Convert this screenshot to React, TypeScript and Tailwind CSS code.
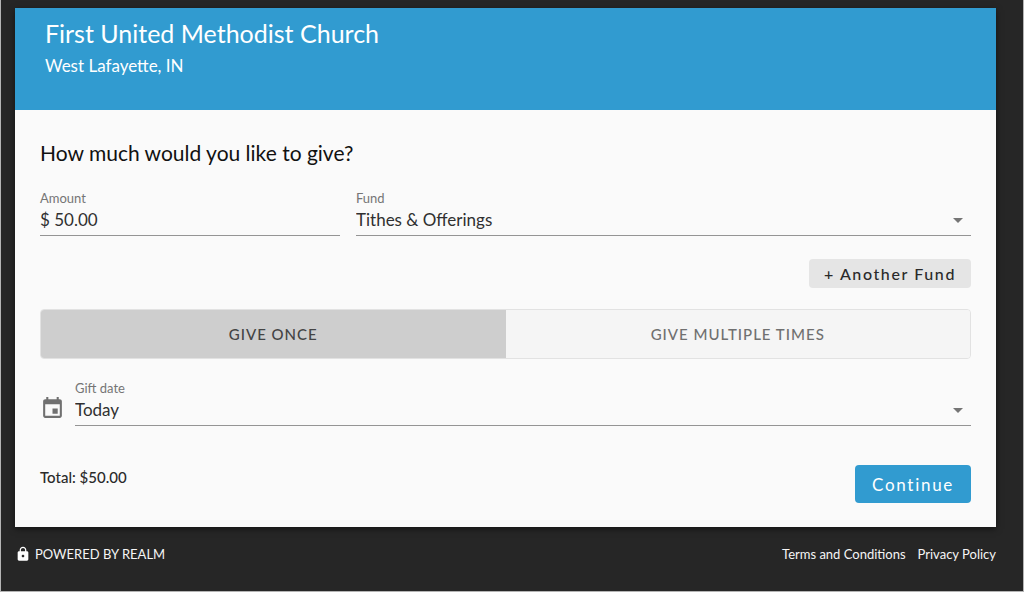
import { useState } from "react";
import type { ReactNode } from "react";

function CaretIcon() {
  return (
    <svg viewBox="0 0 10 5" className="pointer-events-none -ml-[18px] mr-2 h-[5px] w-[10px] shrink-0" fill="#757575" aria-hidden="true">
      <path d="M0 0h10L5 5z" />
    </svg>
  );
}

function CalendarIcon() {
  return (
    <svg viewBox="0 0 24 24" className="mt-4 size-[25px] shrink-0" fill="#707070" aria-hidden="true">
      <path d="M17 12h-5v5h5v-5zM16 1v2H8V1H6v2H5c-1.11 0-1.99.9-1.99 2L3 19c0 1.1.89 2 2 2h14c1.1 0 2-.9 2-2V5c0-1.1-.9-2-2-2h-1V1h-2zm3 18H5V8h14v11z" />
    </svg>
  );
}

function LockIcon() {
  return (
    <svg viewBox="0 0 24 24" className="size-4 shrink-0" fill="#ffffff" aria-hidden="true">
      <path d="M18 8h-1V6c0-2.76-2.24-5-5-5S7 3.24 7 6v2H6c-1.1 0-2 .9-2 2v10c0 1.1.9 2 2 2h12c1.1 0 2-.9 2-2V10c0-1.1-.9-2-2-2zm-6 9c-1.1 0-2-.9-2-2s.9-2 2-2 2 .9 2 2-.9 2-2 2zm3.1-9H8.9V6c0-1.71 1.39-3.1 3.1-3.1s3.1 1.39 3.1 3.1v2z" />
    </svg>
  );
}

function Field({ id, label, className, children }: { id: string; label: string; className: string; children: ReactNode }) {
  return (
    <div className={className}>
      <label htmlFor={id} className="block text-[13px] leading-4 text-[#757575]">
        {label}
      </label>
      <div className="flex h-[30px] items-center border-b border-[#949494] pb-px">{children}</div>
    </div>
  );
}

const control = "h-6 w-full min-w-0 appearance-none bg-transparent text-[17px] leading-6 text-[#303030] outline-none";

export default function App() {
  const [once, setOnce] = useState(true);
  const [amount, setAmount] = useState("$ 50.00");

  return (
    <div className="min-h-screen border-x border-b border-[#b4b4b4] bg-[#262626] pt-2 pr-[27px] pl-[14px] font-['Lato',sans-serif]">
      <main className="bg-[#fafafa] shadow-[0_2px_6px_rgba(0,0,0,0.5)]">
        <header className="h-[102px] bg-[#319bd0] px-[30px] pt-[7px] text-white">
          <h1 className="text-[25px] leading-9">First United Methodist Church</h1>
          <p className="mt-[3px] text-[17px] leading-6">West Lafayette, IN</p>
        </header>

        <form className="px-[25px] pt-[27px] pb-6" onSubmit={(e) => e.preventDefault()}>
          <h2 className="text-[21px] leading-8 text-[#111111]">How much would you like to give?</h2>

          <div className="mt-[21px] flex gap-4">
            <Field id="amount" label="Amount" className="w-[300px] shrink-0">
              <input id="amount" value={amount} onChange={(e) => setAmount(e.target.value)} className={control} />
            </Field>
            <Field id="fund" label="Fund" className="min-w-0 flex-1">
              <select id="fund" className={control}>
                <option>Tithes &amp; Offerings</option>
              </select>
              <CaretIcon />
            </Field>
          </div>

          <div className="mt-[23px] flex justify-end">
            <button type="button" className="h-[29px] rounded bg-[#e5e5e5] px-[15px] text-base leading-6 font-medium tracking-widest text-[#2a2a2a]">
              + Another Fund
            </button>
          </div>

          <div className="mt-[21px] grid h-[50px] grid-cols-2 overflow-hidden rounded border border-[#e2e2e2] text-[15px] font-medium tracking-[1px]">
            <button
              type="button"
              aria-pressed={once}
              onClick={() => setOnce(true)}
              className={once ? "bg-[#cecece] text-[#444444]" : "bg-[#f5f5f5] text-[#707070]"}
            >
              GIVE ONCE
            </button>
            <button
              type="button"
              aria-pressed={!once}
              onClick={() => setOnce(false)}
              className={once ? "bg-[#f5f5f5] text-[#707070]" : "bg-[#cecece] text-[#444444]"}
            >
              GIVE MULTIPLE TIMES
            </button>
          </div>

          <div className="mt-[21px] flex gap-[10px]">
            <CalendarIcon />
            <Field id="gift-date" label="Gift date" className="min-w-0 flex-1">
              <select id="gift-date" className={control}>
                <option>Today</option>
              </select>
              <CaretIcon />
            </Field>
          </div>

          <div className="mt-[39px] flex items-start justify-between">
            <p className="text-[15px] leading-6 font-medium text-[#2a2a2a]">Total: $50.00</p>
            <button type="submit" className="h-[38px] rounded bg-[#319bd0] px-[17px] pt-[2px] text-[17px] tracking-widest text-white">
              Continue
            </button>
          </div>
        </form>
      </main>

      <footer className="flex items-center justify-between pt-[17px] text-[13px] leading-5 text-[#f5f5f5]">
        <div className="flex items-center gap-1">
          <LockIcon />
          <span>POWERED BY REALM</span>
        </div>
        <nav className="flex gap-3">
          <a href="#terms">Terms and Conditions</a>
          <a href="#privacy">Privacy Policy</a>
        </nav>
      </footer>
    </div>
  );
}
